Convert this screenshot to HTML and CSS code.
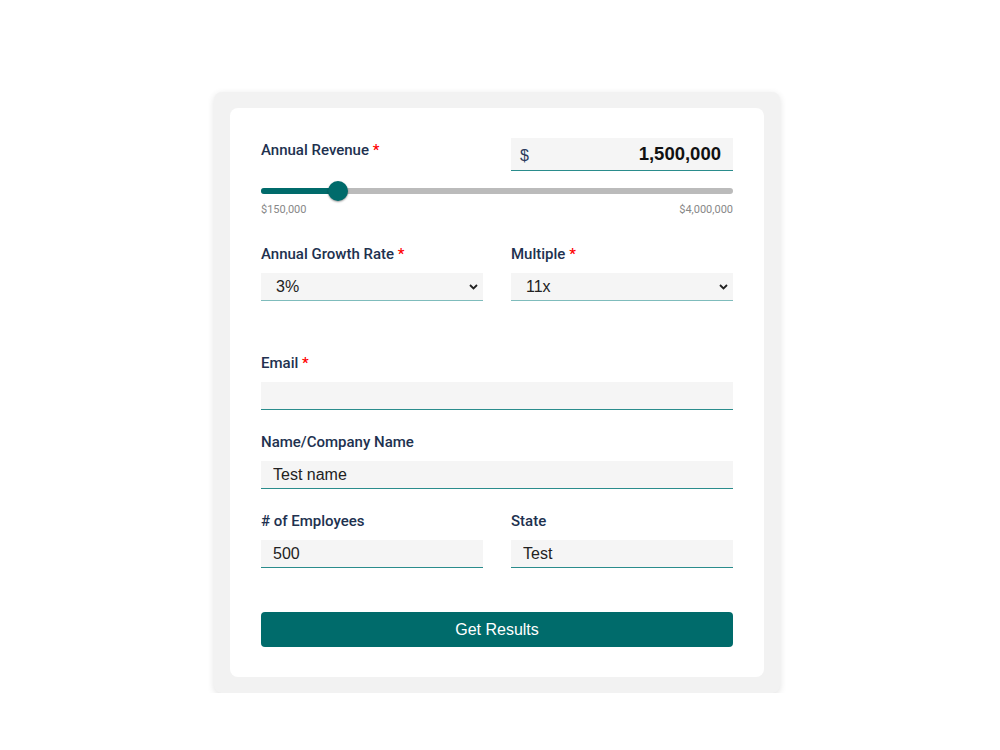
FILE: index.html
```html
<!DOCTYPE html>
<html lang="en">
<head>
    <meta charset="UTF-8">
    <meta name="viewport" content="width=device-width, initial-scale=1.0">
    <title>Business Valuation</title>
    <link rel="stylesheet" href="styles.css">
</head>
<body>
    <div class="wrapper">
        <form class="calc" onsubmit="return false;">
            <!-- revenue with slider -->
            <div class="revenue">
                <div class="revenue-top">
                    <label class="label revenue-label">Annual Revenue <span class="req">*</span></label>
                    <div class="money">
                        <span class="money-sign">$</span>
                        <span class="money-value">1,500,000</span>
                    </div>
                </div>
                <div class="slider">
                    <div class="slider-track">
                        <div class="slider-fill" style="width: 16.3%;"></div>
                    </div>
                    <div class="slider-thumb" style="left: 16.3%;"></div>
                </div>
                <div class="slider-range">
                    <span>$150,000</span>
                    <span>$4,000,000</span>
                </div>
            </div>

            <div class="row row-gap">
                <div class="field">
                    <label class="label">Annual Growth Rate <span class="req">*</span></label>
                    <div class="select-wrap">
                        <select class="input select">
                            <option>3%</option>
                        </select>
                        <svg class="chevron" width="9" height="6" viewBox="0 0 9 6"><path d="M1 1l3.5 3.5L8 1" fill="none" stroke="#222" stroke-width="1.8"/></svg>
                    </div>
                </div>
                <div class="field">
                    <label class="label">Multiple <span class="req">*</span></label>
                    <div class="select-wrap">
                        <select class="input select">
                            <option>11x</option>
                        </select>
                        <svg class="chevron" width="9" height="6" viewBox="0 0 9 6"><path d="M1 1l3.5 3.5L8 1" fill="none" stroke="#222" stroke-width="1.8"/></svg>
                    </div>
                </div>
            </div>

            <div class="field">
                <label class="label">Email <span class="req">*</span></label>
                <input class="input" type="email" value="">
            </div>

            <div class="field">
                <label class="label">Name/Company Name</label>
                <input class="input" type="text" value="Test name">
            </div>

            <div class="row">
                <div class="field">
                    <label class="label"># of Employees</label>
                    <input class="input" type="text" value="500">
                </div>
                <div class="field">
                    <label class="label">State</label>
                    <input class="input" type="text" value="Test">
                </div>
            </div>

            <button class="submit" type="submit">Get Results</button>
        </form>
    </div>
</body>
</html>
```

FILE: styles.css
```css
body {
    margin: 0;
    padding-right: 6px;
    background: #fff;
    font-family: "Liberation Sans", Arial, sans-serif;
}
.wrapper {
    width: 534px;
    margin: 92px auto 0;
    padding: 16px;
    background: #f2f2f2;
    border-radius: 8px;
    box-shadow: 0 2px 7px rgba(0,0,0,0.12);
}
.calc {
    background: #fff;
    border-radius: 8px;
    padding: 30px 31px 30px;
}
.label {
    display: block;
    font-family: Roboto, "Liberation Sans", sans-serif;
    font-weight: 500;
    font-size: 15px;
    line-height: 18px;
    color: #21314f;
    margin-bottom: 10px;
}
.req {
    color: #f00;
}
.revenue-top {
    display: flex;
    justify-content: space-between;
    align-items: flex-start;
}
.revenue-label {
    margin: 3px 0 0;
}
.money {
    width: 222px;
    height: 33px;
    box-sizing: border-box;
    background: #f5f5f5;
    border-bottom: 1px solid #2a8c8c;
    display: flex;
    align-items: center;
    justify-content: space-between;
    padding: 0 12px 0 9px;
}
.money-sign {
    font-size: 16px;
    color: #2a3b5c;
    margin-top: 4px;
}
.money-value {
    font-size: 18.5px;
    font-weight: bold;
    color: #111;
}
.slider {
    position: relative;
    height: 20px;
    margin-top: 10px;
    display: flex;
    align-items: center;
}
.slider-track {
    width: 100%;
    height: 6px;
    background: #bbb;
    border-radius: 3px;
}
.slider-fill {
    height: 100%;
    background: #006b6b;
    border-radius: 3px;
}
.slider-thumb {
    position: absolute;
    top: 0;
    width: 20px;
    height: 20px;
    margin-left: -10px;
    border-radius: 50%;
    background: #006b6b;
    box-shadow: 0 1px 2px rgba(0,0,0,0.4);
}
.slider-range {
    display: flex;
    justify-content: space-between;
    margin: 2px 0 28px;
    font-family: Roboto, "Liberation Sans", sans-serif;
    font-size: 11px;
    line-height: 14px;
    color: #888;
}
.row {
    display: grid;
    grid-template-columns: 1fr 1fr;
    column-gap: 28px;
}
.row-gap {
    margin-bottom: 30px;
}
.field {
    margin-bottom: 23px;
}
.input {
    display: block;
    width: 100%;
    height: 28px;
    box-sizing: border-box;
    border: none;
    border-bottom: 1px solid #2a8c8c;
    background: #f5f5f5;
    padding: 0 12px;
    font-family: "Liberation Sans", Arial, sans-serif;
    font-size: 16px;
    color: #222;
    outline: none;
    border-radius: 0;
}
.select-wrap {
    position: relative;
}
.select {
    appearance: none;
    -webkit-appearance: none;
    padding-left: 15px;
    border-bottom-color: #7fbcbc;
}
.chevron {
    position: absolute;
    right: 5px;
    top: 11px;
    pointer-events: none;
}
.submit {
    display: block;
    width: 100%;
    height: 35px;
    margin-top: 21px;
    border: none;
    border-radius: 4px;
    background: #006b6b;
    color: #fff;
    font-family: "Liberation Sans", Arial, sans-serif;
    font-size: 16px;
    cursor: pointer;
}
```
